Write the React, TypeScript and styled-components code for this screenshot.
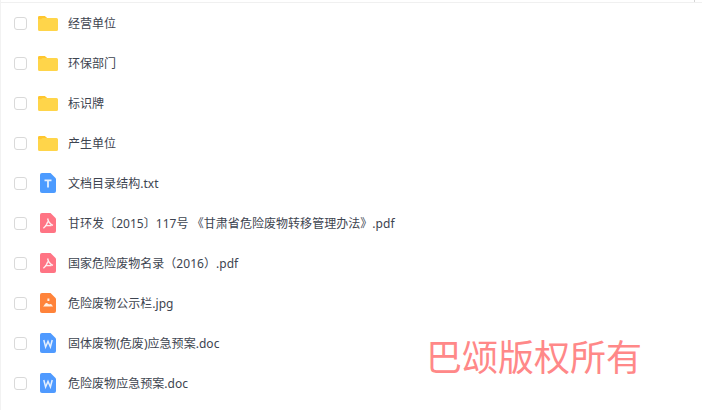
import React from "react";
import styled, { createGlobalStyle } from "styled-components";

type FileKind = "folder" | "txt" | "pdf" | "jpg" | "doc";

const GlobalStyle = createGlobalStyle`
  html, body {
    margin: 0;
    padding: 0;
    background: #fff;
  }
  body {
    font-family: "Noto Sans", "Noto Sans CJK SC", sans-serif;
  }
`;

const Page = styled.div`
  position: relative;
  width: 702px;
  height: 410px;
  overflow: hidden;
  box-sizing: border-box;
  border-left: 1px solid #f2f2f2;
  background: #fff;
`;

const TopBar = styled.div`
  display: flex;
  justify-content: flex-end;
  height: 2px;
  padding-right: 7px;
  border-bottom: 1px solid #f0f0f0;
`;

const TopTick = styled.span`
  width: 1px;
  height: 2px;
  background: #d5d5d5;
`;

const List = styled.ul`
  list-style: none;
  margin: 0;
  padding: 0;
`;

const Row = styled.li`
  display: flex;
  align-items: center;
  height: 40px;
  padding-left: 13px;
`;

const Checkbox = styled.span`
  flex: none;
  width: 11px;
  height: 11px;
  border: 1px solid #d9d9d9;
  border-radius: 3px;
  background: #fff;
`;

const IconSlot = styled.span`
  flex: none;
  display: flex;
  justify-content: center;
  width: 20px;
  margin: 0 10px 0 11px;
`;

const Name = styled.span`
  padding-top: 2px;
  font-size: 12px;
  line-height: 20px;
  letter-spacing: 0.04px;
  color: #3d4450;
  white-space: pre;
`;

const Watermark = styled.div`
  position: absolute;
  left: 425px;
  top: 331px;
  font-family: "Noto Sans CJK SC", sans-serif;
  font-size: 36px;
  line-height: 48px;
  color: #ff8888;
  white-space: nowrap;
`;

const FolderIcon = () => (
  <svg width="20" height="15" viewBox="0 0 20 15">
    <path d="M1.5 0H6.6L9 2H18.5A1.5 1.5 0 0 1 20 3.5V13.5A1.5 1.5 0 0 1 18.5 15H1.5A1.5 1.5 0 0 1 0 13.5V1.5A1.5 1.5 0 0 1 1.5 0Z" fill="#ffd54a" />
    <path d="M1.5 0H6.6L9 2H4.5L3 3.2H0V1.5A1.5 1.5 0 0 1 1.5 0Z" fill="#ffc62e" />
  </svg>
);

const colors: Record<Exclude<FileKind, "folder">, string> = {
  txt: "#4c9bff",
  pdf: "#ff7484",
  jpg: "#ff833a",
  doc: "#4f9aff",
};

const FileIcon = ({ kind }: { kind: Exclude<FileKind, "folder"> }) => (
  <svg width="16" height="20" viewBox="0 0 16 20">
    <path d="M2 0H10.5L16 5.5V18A2 2 0 0 1 14 20H2A2 2 0 0 1 0 18V2A2 2 0 0 1 2 0Z" fill={colors[kind]} />
    {kind === "txt" && <path d="M4.5 6.5H11.5V8.2H8.9V14.5H7.1V8.2H4.5Z" fill="#e4f0ff" />}
    {kind === "pdf" && (
      <path d="M7.6 5.5C8.4 9 9.8 11.2 13 12.4M7.9 8.5C7.2 11 5.6 13.4 3.4 15.2M5 12.6H11.5" fill="none" stroke="#ffeef0" strokeWidth="1.4" />
    )}
    {kind === "jpg" && (
      <>
        <path d="M7.4 5.5H9.4V8H7.4Z" fill="#fff0e4" />
        <path d="M3 13.5C4.2 12.6 5 10.4 6.3 10C7.4 9.7 8 11.2 9 11.2C10 11.2 10.6 10.6 11.3 11.2C12 11.8 12.4 12.8 13 13.5Z" fill="#fff0e4" />
      </>
    )}
    {kind === "doc" && (
      <path d="M3.8 7L5.6 14L8 8.5L10.4 14L12.2 7" fill="none" stroke="#e4f0ff" strokeWidth="1.5" />
    )}
  </svg>
);

const items: { name: string; kind: FileKind }[] = [
  { name: "经营单位", kind: "folder" },
  { name: "环保部门", kind: "folder" },
  { name: "标识牌", kind: "folder" },
  { name: "产生单位", kind: "folder" },
  { name: "文档目录结构.txt", kind: "txt" },
  { name: "甘环发〔2015〕117号 《甘肃省危险废物转移管理办法》.pdf", kind: "pdf" },
  { name: "国家危险废物名录（2016）.pdf", kind: "pdf" },
  { name: "危险废物公示栏.jpg", kind: "jpg" },
  { name: "固体废物(危废)应急预案.doc", kind: "doc" },
  { name: "危险废物应急预案.doc", kind: "doc" },
];

const App = () => (
  <Page>
    <GlobalStyle />
    <TopBar>
      <TopTick />
    </TopBar>
    <List>
      {items.map(({ name, kind }) => (
        <Row key={name}>
          <Checkbox />
          <IconSlot>{kind === "folder" ? <FolderIcon /> : <FileIcon kind={kind} />}</IconSlot>
          <Name>{name}</Name>
        </Row>
      ))}
    </List>
    <Watermark>巴颂版权所有</Watermark>
  </Page>
);

export default App;
